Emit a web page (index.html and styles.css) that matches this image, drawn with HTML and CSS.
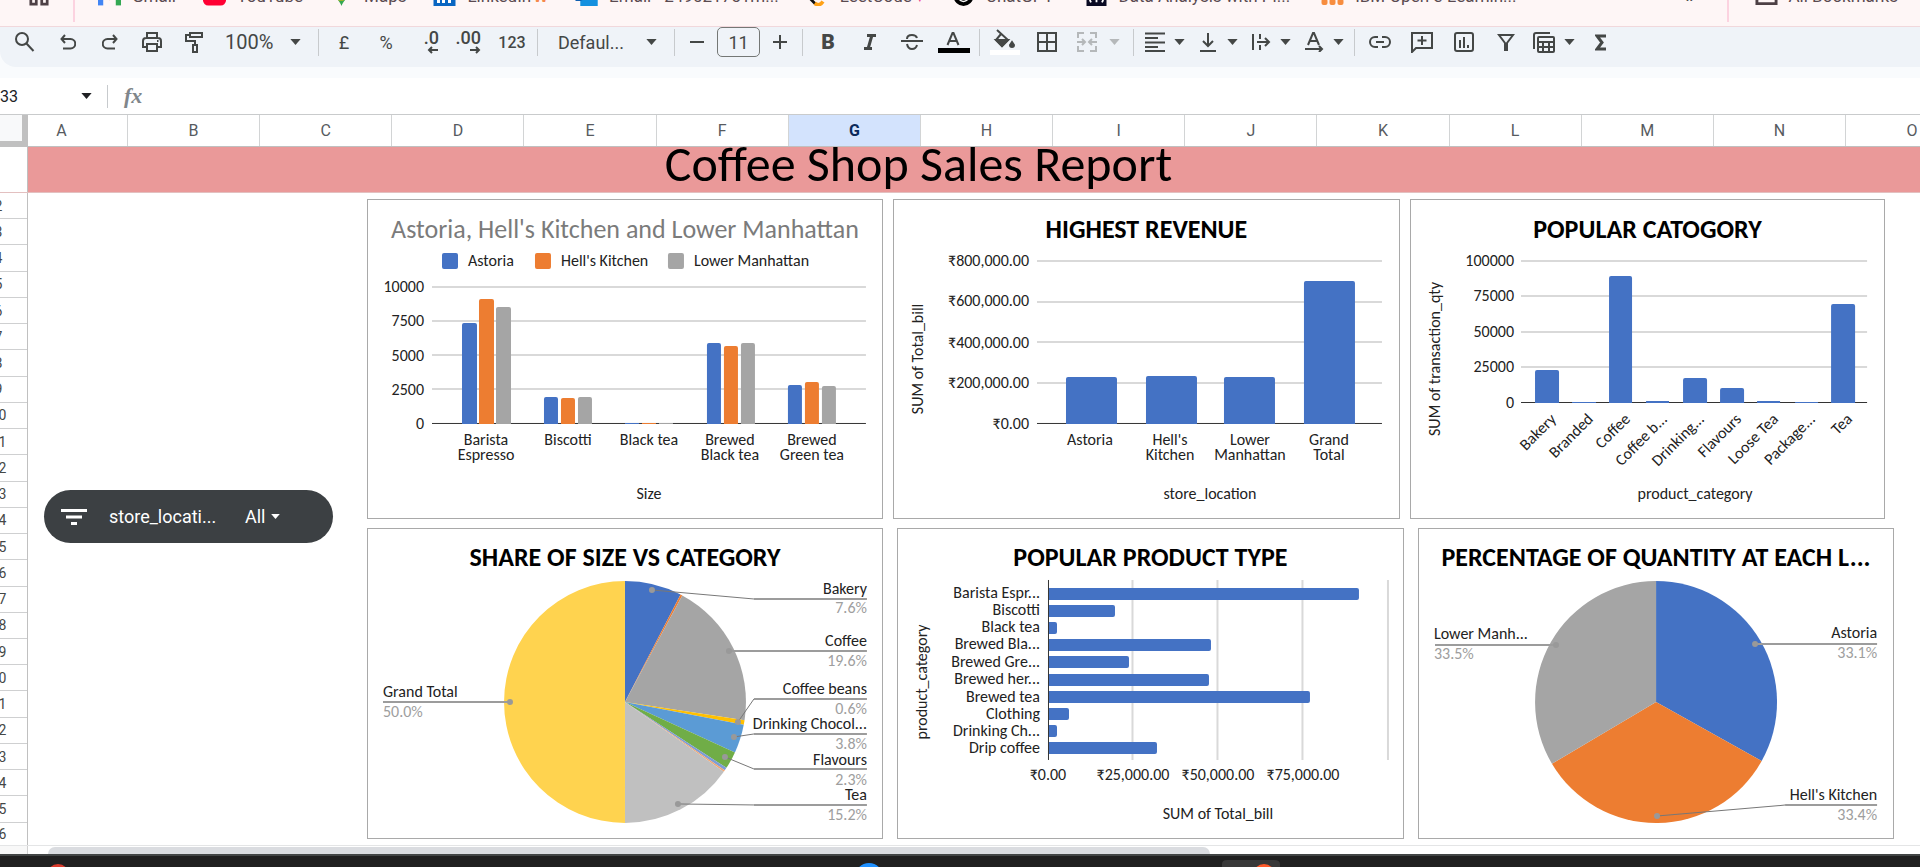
FILE: index.html
```html
<!DOCTYPE html>
<html lang="en">
<head>
<meta charset="utf-8">
<title>Coffee Shop Sales Report</title>
<link rel="stylesheet" href="styles.css">
</head>
<body>
<svg class="defs" aria-hidden="true">
  <symbol id="caret" viewBox="0 0 12 7"><path d="M0 0h12L6 7z" fill="currentColor"/></symbol>
</svg>

<nav class="bookmarks">
  <svg class="apps" viewBox="0 0 22 22"><g fill="none" stroke="#4d4045" stroke-width="3"><path d="M2 2h6v6H2zM14 2h6v6h-6zM2 14h6v6H2zM14 14h6v6h-6z"/></g></svg>
  <span class="bar"></span>
  <a class="mark" href="#"><svg viewBox="0 0 22 18"><path d="M0 2h5v16H0z" fill="#4285f4"/><path d="M17 2h5v16h-5z" fill="#34a853"/><path d="M0 2l11 7 11-7v4l-11 7L0 6z" fill="#ea4335"/></svg>Gmail</a>
  <a class="mark" href="#"><svg viewBox="0 0 22 18"><rect y="1" width="22" height="17" rx="5" fill="#f03"/><path d="M9 6l6 3-6 4z" fill="#fff"/></svg>YouTube</a>
  <a class="mark" href="#"><svg viewBox="0 0 22 22"><path d="M11 22C9 16 4 14 4 8a7 7 0 0 1 14 0c0 6-5 8-7 14z" fill="#34a853"/><path d="M5 12l6-3 5 4-3 3H8z" fill="#fbbc04"/></svg>Maps</a>
  <a class="mark" href="#"><svg viewBox="0 0 22 20"><rect width="22" height="20" fill="#0a66c2"/><path d="M5 8v9M10 17V8M10 12q3-5 6 0v5" fill="none" stroke="#fff" stroke-width="3"/></svg><span>LinkedIn<b class="orange">W</b></span></a>
  <a class="mark" href="#"><svg viewBox="0 0 22 20"><path d="M5 0h17v20H5z" fill="#28a8ea"/><path d="M0 6h12v9H0z" fill="#0f5fb0"/><path d="M5 15l17-8v13H5z" fill="#1490df"/></svg>Email - 249021751m...</a>
  <a class="mark" href="#"><svg viewBox="0 0 22 22"><path d="M14 0L4 10q-2 2 0 5l5 5" fill="none" stroke="#111" stroke-width="3"/><path d="M8 19q5 4 9-2" fill="none" stroke="#ffa116" stroke-width="4"/></svg><span>LeetCode<b class="pink">♥</b></span></a>
  <a class="mark wide" href="#"><svg viewBox="0 0 22 22"><circle cx="11" cy="11" r="11" fill="#000"/><circle cx="11" cy="11" r="6" fill="none" stroke="#fff" stroke-width="1.5"/><path d="M7 9l7 7M15 9l-7 7" stroke="#fff"/></svg>ChatGPT</a>
  <a class="mark wide" href="#"><svg viewBox="0 0 22 22"><rect width="22" height="22" fill="#0a0a23"/><path d="M5 8q-3 5 0 10M17 8q3 5 0 10M11 8v10" fill="none" stroke="#fff" stroke-width="2"/></svg>Data Analysis with Pi...</a>
  <a class="mark" href="#"><svg viewBox="0 0 22 20"><g fill="#f78d3f"><rect y="13" width="6" height="6" rx="2"/><rect x="8" y="13" width="6" height="6" rx="2"/><rect x="16" y="13" width="6" height="6" rx="2"/></g></svg>IBM Open e-Learnin...</a>
  <span class="more">»</span>
  <span class="bar"></span>
  <a class="mark all" href="#"><svg viewBox="0 0 24 20"><path d="M2 1h7l3 3h10v14H2z" fill="none" stroke="#4d4045" stroke-width="3"/></svg>All Bookmarks</a>
</nav>

<header class="tools">
  <div class="toolbar">
    <button class="tool first" aria-label="Search"><svg width="20" height="20" viewBox="0 0 20 20"><circle cx="7" cy="7" r="6"/><path d="M11.500 11.500L18.500 19"/></svg></button>
    <button class="tool" aria-label="Undo"><svg width="16" height="16" viewBox="0 0 16 16"><path d="M5 1L1.500 5 5 9M2 5h8.500a4.500 4.500 0 0 1 0 9.500H3"/></svg></button>
    <button class="tool" aria-label="Redo"><svg width="16" height="16" viewBox="0 0 16 16"><path d="M11 1l3.500 4L11 9M14 5H5.500a4.500 4.500 0 0 0 0 9.500H13"/></svg></button>
    <button class="tool" aria-label="Print"><svg width="20" height="20" viewBox="0 0 20 20"><path d="M5 6V1h10v5M5 15H1V9q0-3 3-3h12q3 0 3 3v6h-4M5 12h10v7H5z"/><path d="M15 9h1.500"/></svg></button>
    <button class="tool" aria-label="Paint format"><svg width="18" height="21" viewBox="0 0 18 21"><path d="M5 1h12v4H5zM5 3H1v6h9v4M8 13h4v7H8z"/></svg></button>
    <label class="pick zoom"><select aria-label="Zoom"><option>100%</option></select><svg class="caret"><use href="#caret"/></svg></label>
    <span class="rule"></span>
    <button class="tool">£</button>
    <button class="tool">%</button>
    <button class="tool dec" aria-label="Decrease decimals"><span>.0</span><svg width="12" height="8" viewBox="0 0 12 8"><path d="M11 4H2M5 1L2 4l3 3"/></svg></button>
    <button class="tool dec" aria-label="Increase decimals"><span>.00</span><svg width="12" height="8" viewBox="0 0 12 8"><path d="M1 4h9M7 1l3 3-3 3"/></svg></button>
    <button class="tool num">123</button>
    <span class="rule"></span>
    <label class="pick face"><select aria-label="Font"><option>Defaul...</option></select><svg class="caret"><use href="#caret"/></svg></label>
    <span class="rule"></span>
    <button class="tool step" aria-label="Decrease font size"><svg width="14" height="14" viewBox="0 0 14 14"><path d="M0 7h14"/></svg></button>
    <input class="size" aria-label="Font size" value="11">
    <button class="tool step" aria-label="Increase font size"><svg width="14" height="14" viewBox="0 0 14 14"><path d="M0 7h14M7 0v14"/></svg></button>
    <span class="rule"></span>
    <button class="tool bold">B</button>
    <button class="tool" aria-label="Italic"><svg width="14" height="16" viewBox="0 0 14 16"><path d="M4 1.500h9M1 14.500h8M9 1L5 15" stroke-width="3"/></svg></button>
    <button class="tool" aria-label="Strikethrough"><svg width="22" height="18" viewBox="0 0 22 18"><path d="M0 8h22M6 6q0-4 5-4 4 0 5 3M6 11q1 5 5 5t5-4"/></svg></button>
    <button class="tool" aria-label="Text color"><svg width="32" height="22" viewBox="0 0 32 22"><path d="M9.500 14L14.500 2h1l5 12M11.500 10h7"/><path d="M0 19.500h32" stroke="#000" stroke-width="5"/></svg></button>
    <span class="rule"></span>
    <button class="tool" aria-label="Fill color"><svg width="30" height="26" viewBox="0 0 30 26"><path d="M7 1l11 10-6 6-6-6 5-6"/><path d="M6 11h12l-6 6z" fill="#444746"/><path d="M22 13l2 3q0 2-2 2t-2-2z" fill="#444746"/><path d="M0 23.500h30" stroke="#fff" stroke-width="5"/></svg></button>
    <button class="tool" aria-label="Borders"><svg width="20" height="20" viewBox="0 0 20 20"><path d="M1 1h18v18H1zM10 1v18M1 10h18"/></svg></button>
    <button class="tool drop merge" disabled aria-label="Merge cells"><svg width="20" height="20" viewBox="0 0 20 20"><path d="M7 1H1v5M13 1h6v5M7 19H1v-5M13 19h6v-5M0 10h8M5 7l3 3-3 3M20 10h-8M15 7l-3 3 3 3"/></svg><svg class="caret"><use href="#caret"/></svg></button>
    <span class="rule"></span>
    <button class="tool drop" aria-label="Horizontal align"><svg width="20" height="20" viewBox="0 0 20 20"><path d="M0 1.500h20M0 6h13M0 10.500h20M0 15h13M0 19h20"/></svg><svg class="caret"><use href="#caret"/></svg></button>
    <button class="tool drop" aria-label="Vertical align"><svg width="20" height="20" viewBox="0 0 20 20"><path d="M10 1v13M5 9l5 5 5-5M2 19h16"/></svg><svg class="caret"><use href="#caret"/></svg></button>
    <button class="tool drop" aria-label="Text wrapping"><svg width="20" height="20" viewBox="0 0 20 20"><path d="M2 2v16M9 2v5M9 13v5M6 10h12M14 6l4 4-4 4"/></svg><svg class="caret"><use href="#caret"/></svg></button>
    <button class="tool drop" aria-label="Text rotation"><svg width="20" height="20" viewBox="0 0 20 20"><path d="M4 13L9 1h1l5 12M6 9h7M1 17h17M15 14l3 3-3 3"/></svg><svg class="caret"><use href="#caret"/></svg></button>
    <span class="rule"></span>
    <button class="tool" aria-label="Insert link"><svg width="22" height="12" viewBox="0 0 22 12"><path d="M9 1H6a5 5 0 0 0 0 10h3M13 1h3a5 5 0 0 1 0 10h-3M7 6h8"/></svg></button>
    <button class="tool" aria-label="Insert comment"><svg width="22" height="21" viewBox="0 0 22 21"><path d="M1 20V1h20v15H5zM11 4v9M6.500 8.500h9"/></svg></button>
    <button class="tool" aria-label="Insert chart"><svg width="20" height="20" viewBox="0 0 20 20"><rect x="1" y="1" width="18" height="18" rx="2"/><path d="M6 8v8M10 5v11M14 13v3"/></svg></button>
    <button class="tool" aria-label="Create a filter"><svg width="18" height="18" viewBox="0 0 18 18"><path d="M2 2h14l-6 8v7H8v-7z"/></svg></button>
    <button class="tool drop" aria-label="Table views"><svg width="22" height="21" viewBox="0 0 22 21"><path d="M1 17V3q0-2 2-2h14"/><rect x="5" y="5" width="16" height="15" rx="1"/><path d="M5 10h16M5 15h16M10 10v10M16 10v10"/></svg><svg class="caret"><use href="#caret"/></svg></button>
    <button class="tool" aria-label="Functions"><svg width="12" height="17" viewBox="0 0 12 17"><path d="M11 2H2l5 6.500L2 15h9" stroke-width="3"/></svg></button>
  </div>
</header>

<div class="formula">
  <label class="cellname"><input aria-label="Name box" value="33"><svg class="caret"><use href="#caret"/></svg></label>
  <span class="rule"></span>
  <i class="fx">fx</i>
</div>

<main class="sheet">
  <div class="columns">
    <span class="corner"></span>
    <span class="col a">A</span><span class="col">B</span><span class="col">C</span><span class="col">D</span><span class="col">E</span><span class="col">F</span><span class="col on">G</span><span class="col">H</span><span class="col">I</span><span class="col">J</span><span class="col">K</span><span class="col">L</span><span class="col">M</span><span class="col">N</span><span class="col o">O</span>
  </div>
  <div class="banner-row">
    <span class="banner-head"></span>
    <h1 class="banner">Coffee Shop Sales Report</h1>
  </div>
  <div class="grid">
    <div class="rows">
      <span>2</span><span>3</span><span>4</span><span>5</span><span>6</span><span>7</span><span>8</span><span>9</span><span>10</span><span>11</span><span>12</span><span>13</span><span>14</span><span>15</span><span>16</span><span>17</span><span>18</span><span>19</span><span>20</span><span>21</span><span>22</span><span>23</span><span>24</span><span>25</span><span class="last">26</span>
    </div>
    <button class="slicer">
      <svg width="26" height="16" viewBox="0 0 26 16"><path d="M0 1.500h26M5 8h16M10 14.500h6" stroke="#fff" stroke-width="3"/></svg>
      <span class="field">store_locati...</span>
      <span>All</span>
      <svg class="caret"><use href="#caret"/></svg>
    </button>

    <div class="charts">
      <div class="line top">
        <section class="card w516">
          <h2 class="plain">Astoria, Hell's Kitchen and Lower Manhattan</h2>
          <svg viewBox="1 46 514 273">
            <rect x="75" y="54" width="16" height="16" rx="2" class="blue"/><text x="101" y="67">Astoria</text>
            <rect x="168" y="54" width="16" height="16" rx="2" class="org"/><text x="194" y="67">Hell's Kitchen</text>
            <rect x="301" y="54" width="16" height="16" rx="2" class="gry"/><text x="327" y="67">Lower Manhattan</text>
            <path class="gridline" d="M65 88h434M65 122h434M65 156h434M65 190h434"/>
            <path class="axis" d="M65 224.500h434"/>
            <g class="end"><text x="57" y="93">10000</text><text x="57" y="127">7500</text><text x="57" y="162">5000</text><text x="57" y="196">2500</text><text x="57" y="230">0</text></g>
            <g class="blue"><path d="M95 225V126q0-2 2-2h11q2 0 2 2v99zM177 225v-25q0-2 2-2h10q2 0 2 2v25zM258 224h14v1h-14zM340 225v-79q0-2 2-2h10q2 0 2 2v79zM421 225v-37q0-2 2-2h10q2 0 2 2v37z"/></g>
            <g class="org"><path d="M112 225V102q0-2 2-2h11q2 0 2 2v123zM194 225v-24q0-2 2-2h10q2 0 2 2v24zM275 224h14v1h-14zM357 225v-76q0-2 2-2h10q2 0 2 2v76zM438 225v-40q0-2 2-2h10q2 0 2 2v40z"/></g>
            <g class="gry"><path d="M129 225V110q0-2 2-2h11q2 0 2 2v115zM211 225v-25q0-2 2-2h10q2 0 2 2v25zM292 224h14v1h-14zM374 225v-79q0-2 2-2h10q2 0 2 2v79zM455 225v-36q0-2 2-2h10q2 0 2 2v36z"/></g>
            <g class="mid"><text x="119" y="246">Barista</text><text x="119" y="261">Espresso</text><text x="201" y="246">Biscotti</text><text x="282" y="246">Black tea</text><text x="363" y="246">Brewed</text><text x="363" y="261">Black tea</text><text x="445" y="246">Brewed</text><text x="445" y="261">Green tea</text><text x="282" y="300">Size</text></g>
          </svg>
        </section>
        <section class="card w507">
          <h2>HIGHEST REVENUE</h2>
          <svg viewBox="1 46 505 273">
            <path class="gridline" d="M144 62h345M144 103h345M144 143h345M144 184h345"/>
            <path class="axis" d="M144 224.500h345"/>
            <g class="end"><text x="136" y="67">₹800,000.00</text><text x="136" y="107">₹600,000.00</text><text x="136" y="149">₹400,000.00</text><text x="136" y="189">₹200,000.00</text><text x="136" y="230">₹0.00</text></g>
            <g class="blue"><path d="M173 225v-45q0-2 2-2h47q2 0 2 2v45zM253 225v-46q0-2 2-2h47q2 0 2 2v46zM331 225v-45q0-2 2-2h47q2 0 2 2v45zM411 225V84q0-2 2-2h47q2 0 2 2v141z"/></g>
            <g class="mid"><text x="197" y="246">Astoria</text><text x="277" y="246">Hell's</text><text x="277" y="261">Kitchen</text><text x="357" y="246">Lower</text><text x="357" y="261">Manhattan</text><text x="436" y="246">Grand</text><text x="436" y="261">Total</text><text x="317" y="300">store_location</text><text transform="translate(30 160) rotate(-90)">SUM of Total_bill</text></g>
          </svg>
        </section>
        <section class="card w475">
          <h2>POPULAR CATOGORY</h2>
          <svg viewBox="1 46 473 273">
            <path class="gridline" d="M111 62h346M111 97h346M111 133h346M111 168h346"/>
            <path class="axis" d="M111 203.500h346"/>
            <g class="end"><text x="104" y="67">100000</text><text x="104" y="102">75000</text><text x="104" y="138">50000</text><text x="104" y="173">25000</text><text x="104" y="209">0</text></g>
            <g class="blue"><path d="M125 204v-31q0-2 2-2h20q2 0 2 2v31zM162 204v-1h24v1zM199 204V79q0-2 2-2h19q2 0 2 2v125zM236 204v-2h23v2zM273 204v-23q0-2 2-2h20q2 0 2 2v23zM310 204v-13q0-2 2-2h20q2 0 2 2v13zM347 204v-2h23v2zM385 204v-1h23v1zM421 204v-97q0-2 2-2h20q2 0 2 2v97z"/></g>
            <g class="end">
              <text transform="translate(147 221) rotate(-45)">Bakery</text><text transform="translate(184 221) rotate(-45)">Branded</text><text transform="translate(221 221) rotate(-45)">Coffee</text><text transform="translate(258 221) rotate(-45)">Coffee b...</text><text transform="translate(295 221) rotate(-45)">Drinking...</text><text transform="translate(332 221) rotate(-45)">Flavours</text><text transform="translate(369 221) rotate(-45)">Loose Tea</text><text transform="translate(406 221) rotate(-45)">Package...</text><text transform="translate(443 221) rotate(-45)">Tea</text>
            </g>
            <g class="mid"><text x="285" y="300">product_category</text><text transform="translate(30 160) rotate(-90)">SUM of transaction_qty</text></g>
          </svg>
        </section>
      </div>
      <div class="line">
        <section class="card w516">
          <h2>SHARE OF SIZE VS CATEGORY</h2>
          <svg viewBox="1 46 514 264">
            <path d="M258 174V53A121 121 0 0 1 313.600 66.500z" class="blue"/>
            <path d="M258 174L313.600 66.500 315.300 67.400z" class="org"/>
            <path d="M258 174L315.300 67.400A121 121 0 0 1 377.600 192.300z" class="gry"/>
            <path d="M258 174L377.600 192.300 376.800 196.900z" fill="#ffc000"/>
            <path d="M258 174L376.800 196.900A121 121 0 0 1 368 224.500z" fill="#5b9bd5"/>
            <path d="M258 174L368 224.500A121 121 0 0 1 359.500 239.900z" fill="#70ad47"/>
            <path d="M258 174L359.500 239.900 357.800 242.400z" fill="#7c9cd6"/>
            <path d="M258 174L357.800 242.400 356.900 243.700z" fill="#f2a46f"/>
            <path d="M258 174L356.900 243.700A121 121 0 0 1 258 295z" fill="#c0c0c0"/>
            <path d="M258 174v121a121 121 0 0 1 0-242z" fill="#ffd34f"/>
            <path class="lead" d="M285 62l102 9M371 194l16-23M367 209l20-3M358 229l29 12M311 276l76 1"/>
            <path class="lead flat" d="M387 71h113M362 123h138M387 171h113M387 206h113M387 241h113M387 277h113M143 174H16"/>
            <g class="dots"><circle cx="285" cy="62" r="3"/><circle cx="362" cy="123" r="3"/><circle cx="371" cy="194" r="3"/><circle cx="367" cy="209" r="3"/><circle cx="358" cy="229" r="3"/><circle cx="311" cy="276" r="3"/><circle cx="143" cy="174" r="3"/></g>
            <g class="end"><text x="500" y="66">Bakery</text><text x="500" y="118">Coffee</text><text x="500" y="166">Coffee beans</text><text x="500" y="201">Drinking Chocol...</text><text x="500" y="237">Flavours</text><text x="500" y="272">Tea</text></g>
            <g class="end pct"><text x="500" y="85">7.6%</text><text x="500" y="138">19.6%</text><text x="500" y="186">0.6%</text><text x="500" y="221">3.8%</text><text x="500" y="257">2.3%</text><text x="500" y="292">15.2%</text></g>
            <text x="16" y="169">Grand Total</text><text class="pct" x="16" y="189">50.0%</text>
          </svg>
        </section>
        <section class="card w507">
          <h2>POPULAR PRODUCT TYPE</h2>
          <svg viewBox="1 46 505 264">
            <path class="gridline" d="M235.500 52v180M320.500 52v180M405.500 52v180M491 52v180"/>
            <g class="blue"><path d="M152 60h308q2 0 2 2v8q0 2-2 2H152zM152 77h64q2 0 2 2v8q0 2-2 2h-64zM152 94h6q2 0 2 2v8q0 2-2 2h-6zM152 111h160q2 0 2 2v8q0 2-2 2H152zM152 128h78q2 0 2 2v8q0 2-2 2h-78zM152 146h158q2 0 2 2v8q0 2-2 2H152zM152 163h259q2 0 2 2v8q0 2-2 2H152zM152 180h18q2 0 2 2v8q0 2-2 2h-18zM152 197h6q2 0 2 2v8q0 2-2 2h-6zM152 214h106q2 0 2 2v8q0 2-2 2H152z"/></g>
            <path class="axis" d="M151.500 52v180"/>
            <g class="end"><text x="143" y="70">Barista Espr...</text><text x="143" y="87">Biscotti</text><text x="143" y="104">Black tea</text><text x="143" y="121">Brewed Bla...</text><text x="143" y="139">Brewed Gre...</text><text x="143" y="156">Brewed her...</text><text x="143" y="174">Brewed tea</text><text x="143" y="191">Clothing</text><text x="143" y="208">Drinking Ch...</text><text x="143" y="225">Drip coffee</text></g>
            <g class="mid"><text x="151" y="252">₹0.00</text><text x="236" y="252">₹25,000.00</text><text x="321" y="252">₹50,000.00</text><text x="406" y="252">₹75,000.00</text><text x="321" y="291">SUM of Total_bill</text><text transform="translate(30 154) rotate(-90)">product_category</text></g>
          </svg>
        </section>
        <section class="card w476">
          <h2>PERCENTAGE OF QUANTITY AT EACH L...</h2>
          <svg viewBox="1 46 474 264">
            <path d="M238 174V53A121 121 0 0 1 343.600 233z" class="blue"/>
            <path d="M238 174L343.600 233A121 121 0 0 1 133.900 235.600z" class="org"/>
            <path d="M238 174L133.900 235.600A121 121 0 0 1 238 53z" class="gry"/>
            <path class="lead" d="M239 288l128-11"/>
            <path class="lead flat" d="M337 116h122M17 117h121M367 277h92"/>
            <g class="dots"><circle cx="337" cy="116" r="3"/><circle cx="138" cy="117" r="3"/><circle cx="239" cy="288" r="3"/></g>
            <g class="end"><text x="459" y="110">Astoria</text><text x="459" y="272">Hell's Kitchen</text></g>
            <g class="end pct"><text x="459" y="130">33.1%</text><text x="459" y="292">33.4%</text></g>
            <text x="16" y="111">Lower Manh...</text><text class="pct" x="16" y="131">33.5%</text>
          </svg>
        </section>
      </div>
    </div>
  </div>
  <div class="scroll"><span class="scroll-corner"></span><span class="thumb"></span></div>
</main>

<footer class="taskbar">
  <svg viewBox="0 0 1920 11" preserveAspectRatio="none"><path d="M1222 11V8q0-4 5-4h47q6 0 6 4v3z" fill="#383838"/><circle cx="58" cy="19" r="11" fill="#d93a2b"/><circle cx="869" cy="21" r="14" fill="#1e90ff"/><circle cx="1264" cy="19" r="11" fill="#ff5a2a"/></svg>
</footer>
</body>
</html>
```
FILE: styles.css
```css
* { box-sizing: border-box; }

body {
  margin: 0;
  min-height: 100vh;
  display: flex;
  flex-direction: column;
  overflow: hidden;
  background: #fff;
  color: #444746;
  font-family: Roboto, "Liberation Sans", sans-serif;
}

button, select, input {
  font: inherit;
  color: inherit;
  border: 0;
  padding: 0;
  background: none;
  appearance: none;
}

.defs { display: none; }
.caret { width: 11px; height: 6px; flex: none; }

/* Bookmarks strip, scrolled partly off the top edge */
.bookmarks {
  flex: none;
  height: 27px;
  display: flex;
  align-items: flex-start;
  padding: 0 22px 0 28px;
  overflow: hidden;
  background: #fef6f6;
  border-bottom: 1px solid #f1d8dc;
  font-size: 17px;
  line-height: 20px;
  white-space: nowrap;
}
.bookmarks > * { margin-top: -14px; }
.mark {
  display: flex;
  align-items: center;
  gap: 11px;
  margin-right: 27px;
  color: #5a4a50;
  text-decoration: none;
}
.mark.wide { margin-right: 31px; }
.mark svg { width: 23px; height: 20px; }
.apps { width: 22px; height: 20px; }
.bar { width: 2px; height: 22px; margin: 0 23px; background: #fcd3e0; }
.orange { margin-left: 2px; color: #f5894c; }
.pink { margin-left: 3px; color: #f0418c; }
.more { margin-left: auto; font-size: 22px; }
.more + .bar { margin: 0 26px 0 31px; }
.mark.all { margin-right: 0; }

/* Toolbar */
.tools { flex: none; padding: 0 0 11px; background: #f9fbfd; }
.toolbar {
  display: flex;
  align-items: center;
  height: 40px;
  padding: 0 0 10px 3px;
  background: #eff3f8;
  border-radius: 0 0 0 16px;
  font-size: 18px;
}
.tool {
  flex: none;
  width: 42px;
  height: 30px;
  display: flex;
  align-items: center;
  justify-content: center;
}
.tool svg:not(.caret) { fill: none; stroke: currentColor; stroke-width: 2; flex: none; }
.tool.first { width: 44px; }
.drop { width: 53px; gap: 9px; }
.merge { width: 61px; gap: 12px; color: #b5b8ba; }
.num { font-size: 16px; font-weight: 500; }
.bold { font-size: 21px; font-weight: 900; }
.step { width: 36px; }
.dec { flex-direction: column; align-items: flex-end; padding-right: 10px; font-weight: 500; line-height: 16px; }
.rule { flex: none; width: 1px; height: 27px; margin: 0 4px; background: #c7cacd; }
.pick { display: flex; align-items: center; justify-content: space-between; flex: none; }
.zoom { width: 99px; padding: 0 13px 0 10px; font-size: 20px; }
.face { width: 128px; padding: 0 13px 0 16px; }
.size {
  width: 43px;
  height: 30px;
  margin: 0 2px;
  border: 1px solid #747775;
  border-radius: 5px;
  text-align: center;
}

/* Formula bar */
.formula {
  flex: none;
  height: 37px;
  display: flex;
  align-items: center;
  border-bottom: 1px solid #c9cbcc;
}
.formula .rule { height: 23px; }
.cellname { display: flex; align-items: center; width: 103px; padding-right: 12px; color: #202124; }
.cellname input { width: 81px; font-size: 16px; }
.fx { padding-left: 12px; font: italic 700 22px "Liberation Serif", serif; color: #80868b; }

/* Sheet */
.sheet { flex: 1; display: flex; flex-direction: column; }
.columns { display: flex; height: 32px; flex: none; border-bottom: 1px solid #c0c0c0; font-size: 16px; line-height: 31px; color: #575b5f; text-align: center; overflow: hidden; }
.corner { flex: none; width: 28px; background: #f8f9fa; border-right: 6px solid #c0c0c0; border-bottom: 5px solid #c0c0c0; }
.col { flex: 1 1 0; border-right: 1px solid #d2d4d5; }
.col.a { flex: 0 0 100px; padding-right: 32px; }
.col.o { flex: 0 0 74px; padding-left: 58px; border: 0; }
.col.on { background: #d3e3fd; color: #0b2a5b; font-weight: 700; }

.banner-row { display: flex; flex: none; height: 46px; border-bottom: 1px solid #e3c0c0; }
.banner-head { flex: none; width: 28px; border-right: 1px solid #c0c0c0; }
.banner {
  flex: 1;
  margin: 0;
  padding-right: 111px;
  overflow: hidden;
  background: #ea9999;
  color: #000;
  font: 50px/34px Carlito, Lato, sans-serif;
  text-align: center;
}

.grid { flex: 1; display: flex; align-items: flex-start; overflow: hidden; }
.rows {
  flex: none;
  align-self: stretch;
  display: flex;
  flex-direction: column;
  width: 58px;
  margin-left: -30px;
  border-right: 1px solid #c0c0c0;
  font-size: 14px;
  text-align: center;
}
.rows span { flex: 26 1 0; display: flex; align-items: center; justify-content: center; border-bottom: 1px solid #cfd0d1; }
.rows .last { flex-grow: 23; border: 0; }

.slicer {
  flex: none;
  display: flex;
  align-items: center;
  width: 289px;
  height: 53px;
  margin: 297px 0 0 16px;
  padding-left: 17px;
  border-radius: 27px;
  background: #3c4043;
  color: #fff;
  font-size: 18px;
}
.slicer .field { width: 136px; margin-left: 22px; text-align: left; }
.slicer .caret { margin-left: 4px; height: 5px; }

.charts { flex: 1; display: flex; flex-direction: column; gap: 9px; padding: 6px 26px 6px 34px; }
.line { display: flex; gap: 14px; }
.line.top { gap: 10px; padding-right: 9px; }
.card { min-width: 0; border: 1px solid #a9a9a9; background: #fff; }
.w516 { flex: 516 1 0; }
.w507 { flex: 507 1 0; }
.w475 { flex: 475 1 0; }
.w476 { flex: 476 1 0; }
.card h2 {
  margin: 0;
  height: 45px;
  overflow: hidden;
  color: #000;
  font: 700 26px/59px Carlito, Lato, sans-serif;
  text-align: center;
  white-space: nowrap;
}
.card h2.plain { color: #7b7b7b; font-weight: 400; }
.line:not(.top) h2 { line-height: 57px; }
.card svg { display: block; width: 100%; }
.card text { font: 16px Carlito, Lato, sans-serif; fill: #222; }
.card .pct text, .card text.pct { fill: #9e9e9e; }
.end { text-anchor: end; }
.mid { text-anchor: middle; }
.blue { fill: #4472c4; }
.org { fill: #ed7d31; }
.gry { fill: #a5a5a5; }
.gridline { stroke: #d9d9d9; stroke-width: 2; fill: none; }
.axis { stroke: #333; fill: none; }
.lead { stroke: #777; stroke-width: 1; fill: none; }
.lead.flat { stroke: #9c9c9c; stroke-width: 2; }
.dots { fill: #999; }

.scroll { display: flex; flex: none; height: 9px; border-top: 1px solid #e4e5e6; }
.scroll-corner { width: 28px; background: #f8f8f8; border-right: 1px solid #d0d0d0; }
.thumb { width: 60.5%; height: 7px; margin: 1px 0 0 20px; border-radius: 7px 7px 0 0; background: #dadce0; }

.taskbar { flex: none; height: 13px; background: #202020; border-top: 2px solid #424545; }
.taskbar svg { display: block; width: 100%; height: 11px; }
```
